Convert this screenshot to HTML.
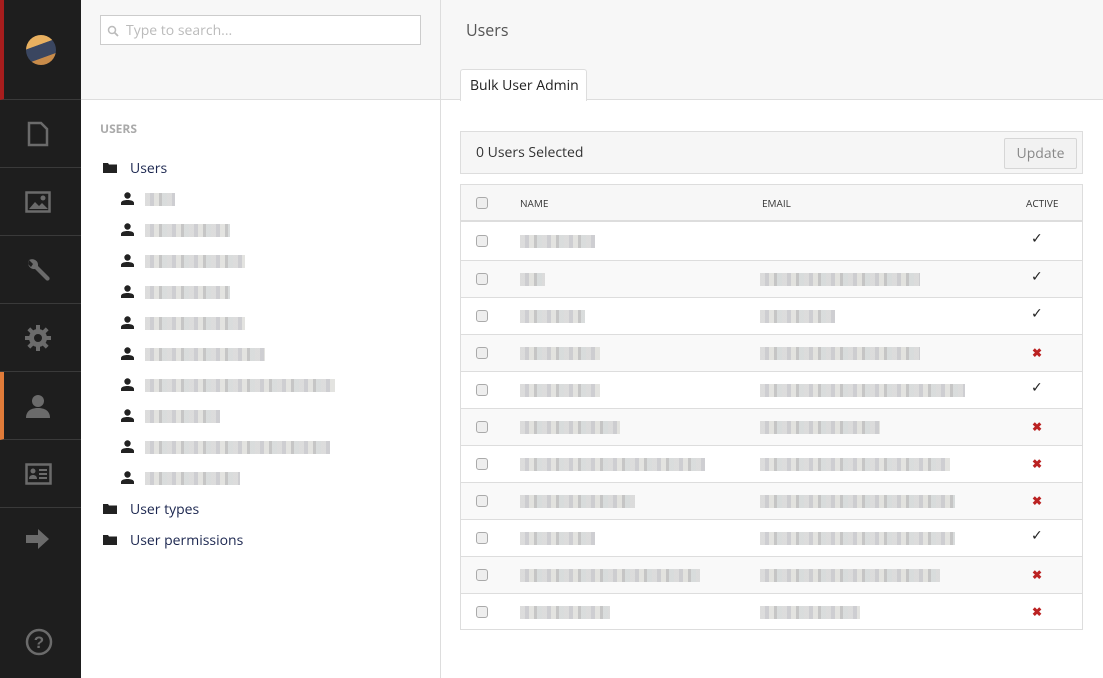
<!DOCTYPE html>
<html><head><meta charset="utf-8"><style>
*{box-sizing:border-box;margin:0;padding:0}
body{width:1103px;height:678px;overflow:hidden;font-family:"Open Sans","Liberation Sans",sans-serif;background:#fff;position:relative;color:#343434}
.side{position:absolute;left:0;top:0;width:81px;height:678px;background:#1e1e1e}
.sec{position:absolute;left:0;width:81px;height:68px;border-bottom:1px solid #3a3a3a;display:flex;align-items:center;justify-content:center}
.abs{position:absolute}
.blur{position:absolute;height:13px;background:repeating-linear-gradient(90deg,#d4d4d4 0 5px,#c2c2c6 5px 9px,#dcdcd8 9px 14px,#b8b8b8 14px 17px,#d0d4d4 17px 22px);opacity:.8}
.tree{position:absolute;font-size:14px;color:#1b264f}
.row{position:absolute;left:461px;width:621px;height:37px;border-top:1px solid #ddd}
.cb{position:absolute;left:15px;top:12px;width:12px;height:12px;border:1px solid #aaa;border-radius:3px;background:#eee}
.ok{position:absolute;left:570px;top:8px;font-size:14px;color:#222;font-family:"DejaVu Sans",sans-serif}
.no{position:absolute;left:571px;top:9px;font-size:12px;color:#b22;font-weight:bold}
</style></head><body>
<div class="side">
 <div class="sec" style="top:0;height:100px;border-left:4px solid #a71d1d">
  <div style="width:30px;height:30px;border-radius:50%;background:linear-gradient(160deg,#e8b060 0 35%,#3a4660 36% 70%,#c88b4a 71%);margin-left:-4px"></div></div>
 <div class="sec" style="top:100px"><svg width="22" height="26" viewBox="0 0 22 26" style="margin-left:-5px"><path d="M2 2h12l6 6v16H2z" fill="none" stroke="#6b6b6b" stroke-width="2.5"/></svg></div>
 <div class="sec" style="top:168px"><svg width="26" height="22" viewBox="0 0 26 22" style="margin-left:-5px"><rect x="1.5" y="1.5" width="23" height="19" fill="none" stroke="#6b6b6b" stroke-width="2.5"/><path d="M4 18l6-7 4 4 3-3 6 6z" fill="#6b6b6b"/><circle cx="18" cy="7" r="2.5" fill="#6b6b6b"/></svg></div>
 <div class="sec" style="top:236px"><svg width="26" height="26" viewBox="0 0 26 26" style="margin-left:-5px"><path d="M4 3a6 6 0 0 0 6 9l11 11a2 2 0 0 0 3-3L13 9A6 6 0 0 0 4 3l4 4-2 3-3-3z" fill="#6b6b6b"/></svg></div>
 <div class="sec" style="top:304px"><svg width="26" height="26" viewBox="0 0 26 26" style="margin-left:-5px"><g fill="#6b6b6b"><circle cx="13" cy="13" r="9"/><rect x="11" y="0" width="4" height="26"/><rect x="0" y="11" width="26" height="4"/><rect x="11" y="0" width="4" height="26" transform="rotate(45 13 13)"/><rect x="11" y="0" width="4" height="26" transform="rotate(-45 13 13)"/></g><circle cx="13" cy="13" r="4" fill="#1e1e1e"/></svg></div>
 <div class="sec" style="top:372px;border-left:4px solid #e07b39"><svg width="26" height="26" viewBox="0 0 26 26" style="margin-left:-9px"><circle cx="13" cy="8" r="6" fill="#6b6b6b"/><path d="M1 25c0-7 5-10 12-10s12 3 12 10z" fill="#6b6b6b"/></svg></div>
 <div class="sec" style="top:440px"><svg width="27" height="22" viewBox="0 0 27 22" style="margin-left:-5px"><rect x="1.5" y="1.5" width="24" height="19" fill="none" stroke="#6b6b6b" stroke-width="2.5"/><circle cx="8" cy="8" r="2.5" fill="#6b6b6b"/><path d="M4 16c0-3 2-4 4-4s4 1 4 4z" fill="#6b6b6b"/><rect x="14" y="6" width="8" height="2" fill="#6b6b6b"/><rect x="14" y="10" width="8" height="2" fill="#6b6b6b"/><rect x="14" y="14" width="8" height="2" fill="#6b6b6b"/></svg></div>
 <div class="sec" style="top:508px;border:none"><svg width="26" height="22" viewBox="0 0 26 22" style="margin-left:-5px;margin-top:-6px"><path d="M1 7h12V1l11 10-11 10v-6H1z" fill="#6b6b6b"/></svg></div>
 <div class="abs" style="left:25px;top:628px"><svg width="28" height="28" viewBox="0 0 28 28"><circle cx="14" cy="14" r="12" fill="none" stroke="#6b6b6b" stroke-width="2.5"/><text x="14" y="20" text-anchor="middle" font-size="17" font-weight="bold" fill="#6b6b6b" font-family="Liberation Sans">?</text></svg></div>
</div>

<div class="abs" style="left:81px;top:0;width:359px;height:100px;background:#f7f7f7;border-bottom:1px solid #ddd"></div>
<div class="abs" style="left:100px;top:15px;width:321px;height:30px;border:1px solid #ccc;background:#fff;font-size:14px;color:#bbb;padding:5px 0 0 25px">Type to search...
 <svg class="abs" style="left:6px;top:9px" width="12" height="12" viewBox="0 0 12 12"><circle cx="5" cy="5" r="3.5" fill="none" stroke="#bbb" stroke-width="1.5"/><path d="M7.5 7.5l3.5 3.5" stroke="#bbb" stroke-width="1.8"/></svg></div>
<div class="abs" style="left:440px;top:0;width:1px;height:678px;background:#ddd"></div>

<div class="abs" style="left:100px;top:120px;font-size:12px;font-weight:bold;color:#aaa">USERS</div>
<svg class="abs" style="left:103px;top:162px" width="14" height="11"><path d="M0 1h5l1 1.5h8V11H0z" fill="#222"/></svg>
<div class="tree" style="left:130px;top:159px">Users</div>
<div id="tu"></div>
<svg class="abs" style="left:103px;top:503px" width="14" height="11"><path d="M0 1h5l1 1.5h8V11H0z" fill="#222"/></svg>
<div class="tree" style="left:130px;top:500px">User types</div>
<svg class="abs" style="left:103px;top:534px" width="14" height="11"><path d="M0 1h5l1 1.5h8V11H0z" fill="#222"/></svg>
<div class="tree" style="left:130px;top:531px">User permissions</div>

<div class="abs" style="left:441px;top:0;width:662px;height:100px;background:#f7f7f7;border-bottom:1px solid #ddd"></div>
<div class="abs" style="left:466px;top:19px;font-size:16px;color:#555">Users</div>
<div class="abs" style="left:460px;top:69px;width:127px;height:32px;background:#fff;border:1px solid #ddd;border-bottom:none;border-radius:3px 3px 0 0;font-size:14px;color:#222;padding:6px 0 0 9px">Bulk User Admin</div>

<div class="abs" style="left:460px;top:131px;width:623px;height:43px;background:#f6f6f6;border:1px solid #ddd"></div>
<div class="abs" style="left:476px;top:143px;font-size:14px;color:#333">0 Users Selected</div>
<div class="abs" style="left:1004px;top:138px;width:73px;height:31px;border:1px solid #d6d6d6;border-radius:2px;background:#f2f2f2;font-size:14px;color:#888;text-align:center;padding-top:5px">Update</div>

<div class="abs" style="left:460px;top:184px;width:623px;height:446px;border:1px solid #ddd"></div>
<div class="row" style="top:185px;height:37px;border:none;border-bottom:2px solid #ddd;background:#f7f7f7">
 <div class="cb"></div>
 <div class="abs" style="left:59px;top:11px;font-size:10px;color:#333">NAME</div>
 <div class="abs" style="left:301px;top:11px;font-size:10px;color:#333">EMAIL</div>
 <div class="abs" style="left:565px;top:11px;font-size:10px;color:#333">ACTIVE</div>
</div>
<div id="rows"></div>
<script>
var tw=[30,85,100,85,100,120,190,75,185,95],h='';
tw.forEach(function(w,i){var y=199+i*31;h+='<svg class="abs" style="left:121px;top:'+(y-7)+'px" width="13" height="13" viewBox="0 0 13 13"><circle cx="6.5" cy="3.5" r="3.2" fill="#222"/><path d="M0 13v-2c0-2 3-3 6.5-3s6.5 1 6.5 3v2z" fill="#222"/></svg><div class="blur" style="left:145px;top:'+(y-6)+'px;width:'+w+'px"></div>';});
document.getElementById('tu').innerHTML=h;
var r=[[75,0,1],[25,160,1],[65,75,1],[80,160,0],[80,205,1],[100,120,0],[185,190,0],[115,195,0],[75,195,1],[180,180,0],[90,100,0]],s='';
r.forEach(function(d,i){var y=223+i*37;s+='<div class="row" style="top:'+y+'px;'+(i%2?'background:#f9f9f9;':'')+(i==0?'border-top:none;':'')+'"><div class="cb"></div><div class="blur" style="left:59px;top:12px;width:'+d[0]+'px"></div>'+(d[1]?'<div class="blur" style="left:299px;top:12px;width:'+d[1]+'px"></div>':'')+(d[2]?'<div class="ok">✓</div>':'<div class="no">✖</div>')+'</div>';});
document.getElementById('rows').innerHTML=s;
</script>
</body></html>
